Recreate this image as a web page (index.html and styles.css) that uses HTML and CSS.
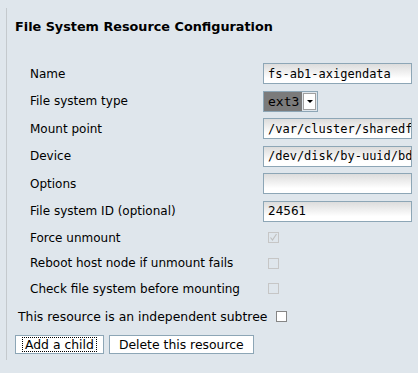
FILE: index.html
```html
<!DOCTYPE html>
<html lang="en">
<head>
<meta charset="UTF-8" />
<title>File System Resource Configuration</title>
<link rel="stylesheet" href="styles.css">
</head>
<body>

<div class="panel">
  <h2>File System Resource Configuration</h2>
  <form class="fields">
    <label for="name">Name</label>
    <input type="text" id="name" class="field" value="fs-ab1-axigendata" />

    <label>File system type</label>
    <div class="select">
      <span class="select-value">ext3</span>
      <span class="select-btn"><span class="arrow"></span></span>
    </div>

    <label for="mountpoint">Mount point</label>
    <input type="text" id="mountpoint" class="field" value="/var/cluster/sharedfs" />

    <label for="device">Device</label>
    <input type="text" id="device" class="field" value="/dev/disk/by-uuid/bd" />

    <label for="options">Options</label>
    <input type="text" id="options" class="field" value="" />

    <label for="fsid">File system ID (optional)</label>
    <input type="text" id="fsid" class="field" value="24561" />

    <label class="check-label">Force unmount</label>
    <span class="check disabled checked"></span>

    <label class="check-label">Reboot host node if unmount fails</label>
    <span class="check disabled"></span>

    <label class="check-label">Check file system before mounting</label>
    <span class="check disabled"></span>
  </form>

  <div class="subtree">
    <span class="subtree-label">This resource is an independent subtree</span>
    <span class="check"></span>
  </div>

  <div class="buttons">
    <button type="button" class="focused"><span>Add a child</span></button>
    <button type="button"><span>Delete this resource</span></button>
  </div>
</div>

</body>
</html>
```

FILE: styles.css
```css
body {
  margin: 0;
  padding: 0;
  background: #dfe6ec;
  font-family: "DejaVu Sans", Verdana, sans-serif;
  font-size: 12px;
  color: #000;
}
.panel {
  margin: 8px 0 0 6px;
  border-left: 1px solid #c4c9cd;
  height: 352px;
}
h2 {
  margin: 0;
  padding: 11px 0 0 8px;
  font-size: 12.8px;
  font-weight: bold;
  line-height: 16px;
}
.fields {
  display: grid;
  grid-template-columns: 233px 149px;
  grid-template-rows: repeat(6, 21px) repeat(3, 19px);
  row-gap: 6.5px;
  align-items: center;
  margin: 28px 0 0 23px;
}
label {
  line-height: 16px;
}
.field {
  box-sizing: border-box;
  width: 149px;
  height: 21px;
  margin: 0;
  padding: 0 0 0 4px;
  border: 1px solid #8da6b6;
  background: linear-gradient(#dcdcdc, #fff 75%);
  font-family: "DejaVu Sans Mono", monospace;
  font-size: 12px;
  color: #000;
  outline: none;
}
#fsid {
  font-family: "DejaVu Sans", sans-serif;
}
.select {
  display: flex;
  width: 55px;
  height: 21px;
  box-sizing: border-box;
  border: 1px solid #8da6b6;
}
.select-value {
  flex: 1;
  background: #7b7b7b;
  font-family: "DejaVu Sans Mono", monospace;
  font-size: 13px;
  line-height: 19px;
  padding-left: 4px;
}
.select-btn {
  width: 13px;
  margin: 1px;
  background: #fff;
  border: 1px solid #a0a0a0;
  box-sizing: border-box;
  display: flex;
  align-items: center;
  justify-content: center;
}
.arrow {
  width: 0;
  height: 0;
  border-left: 3px solid transparent;
  border-right: 3px solid transparent;
  border-top: 3px solid #000;
}
.check {
  display: inline-block;
  width: 11px;
  height: 11px;
  box-sizing: border-box;
  border: 1px solid #858585;
  background: #fff;
}
.fields .check {
  margin-left: 5px;
}
.check.disabled {
  border-color: #c6c6c6;
  background: transparent;
}
.check.checked {
  background: url("data:image/svg+xml,%3Csvg xmlns='http://www.w3.org/2000/svg' width='9' height='9'%3E%3Cpath d='M1.5 4.5 L3.5 7 L7.5 1' fill='none' stroke='%23c0c0c0' stroke-width='1.2'/%3E%3C/svg%3E") center no-repeat;
}
.subtree {
  display: flex;
  align-items: center;
  margin: 9px 0 0 11px;
  height: 18px;
  font-size: 12.4px;
}
.subtree-label {
  width: 258px;
}
.buttons {
  display: flex;
  gap: 5px;
  margin: 10px 0 0 8px;
}
button {
  box-sizing: border-box;
  height: 19px;
  margin: 0;
  padding: 1px 6px;
  border: 1px solid #8da6b6;
  background: #fff;
  font-family: "DejaVu Sans", sans-serif;
  font-size: 12.4px;
  color: #000;
  cursor: pointer;
}
button span {
  display: block;
  padding: 0 2px;
  line-height: 13px;
  border: 1px solid transparent;
}
button.focused span {
  border: 1px dotted #000;
}
```
